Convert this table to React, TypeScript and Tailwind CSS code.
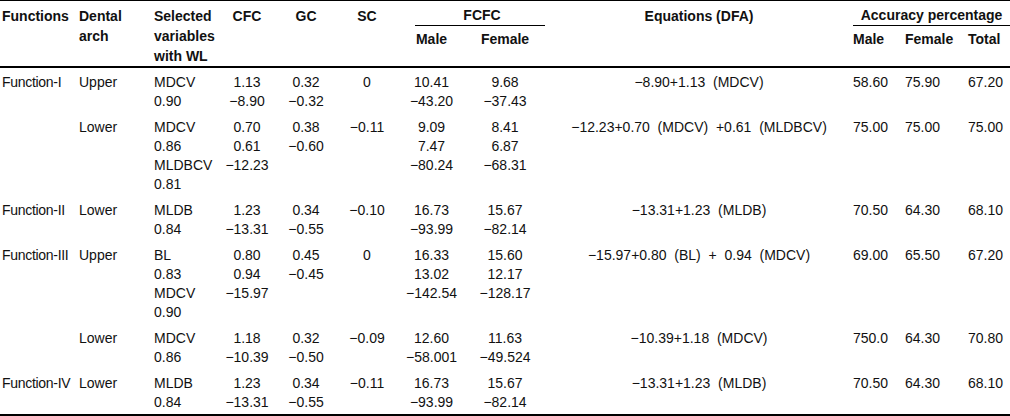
import React from 'react';

type Row = {
  fn: string;
  arch: string;
  vars: string[];
  cfc: string[];
  gc: string[];
  sc: string[];
  male: string[];
  female: string[];
  eq: string;
  acc: [string, string, string];
};

const rows: Row[] = [
  {
    fn: 'Function-I',
    arch: 'Upper',
    vars: ['MDCV', '0.90'],
    cfc: ['1.13', '\u22128.90'],
    gc: ['0.32', '\u22120.32'],
    sc: ['0'],
    male: ['10.41', '\u221243.20'],
    female: ['9.68', '\u221237.43'],
    eq: '\u22128.90+1.13  (MDCV)',
    acc: ['58.60', '75.90', '67.20'],
  },
  {
    fn: '',
    arch: 'Lower',
    vars: ['MDCV', '0.86', 'MLDBCV', '0.81'],
    cfc: ['0.70', '0.61', '\u221212.23'],
    gc: ['0.38', '\u22120.60'],
    sc: ['\u22120.11'],
    male: ['9.09', '7.47', '\u221280.24'],
    female: ['8.41', '6.87', '\u221268.31'],
    eq: '\u221212.23+0.70  (MDCV)  +0.61  (MLDBCV)',
    acc: ['75.00', '75.00', '75.00'],
  },
  {
    fn: 'Function-II',
    arch: 'Lower',
    vars: ['MLDB', '0.84'],
    cfc: ['1.23', '\u221213.31'],
    gc: ['0.34', '\u22120.55'],
    sc: ['\u22120.10'],
    male: ['16.73', '\u221293.99'],
    female: ['15.67', '\u221282.14'],
    eq: '\u221213.31+1.23  (MLDB)',
    acc: ['70.50', '64.30', '68.10'],
  },
  {
    fn: 'Function-III',
    arch: 'Upper',
    vars: ['BL', '0.83', 'MDCV', '0.90'],
    cfc: ['0.80', '0.94', '\u221215.97'],
    gc: ['0.45', '\u22120.45'],
    sc: ['0'],
    male: ['16.33', '13.02', '\u2212142.54'],
    female: ['15.60', '12.17', '\u2212128.17'],
    eq: '\u221215.97+0.80  (BL)  +  0.94  (MDCV)',
    acc: ['69.00', '65.50', '67.20'],
  },
  {
    fn: '',
    arch: 'Lower',
    vars: ['MDCV', '0.86'],
    cfc: ['1.18', '\u221210.39'],
    gc: ['0.32', '\u22120.50'],
    sc: ['\u22120.09'],
    male: ['12.60', '\u221258.001'],
    female: ['11.63', '\u221249.524'],
    eq: '\u221210.39+1.18  (MDCV)',
    acc: ['750.0', '64.30', '70.80'],
  },
  {
    fn: 'Function-IV',
    arch: 'Lower',
    vars: ['MLDB', '0.84'],
    cfc: ['1.23', '\u221213.31'],
    gc: ['0.34', '\u22120.55'],
    sc: ['\u22120.11'],
    male: ['16.73', '\u221293.99'],
    female: ['15.67', '\u221282.14'],
    eq: '\u221213.31+1.23  (MLDB)',
    acc: ['70.50', '64.30', '68.10'],
  },
];

const Lines = ({ items }: { items: string[] }) => (
  <>
    {items.map((t, i) => (
      <div key={i}>{t}</div>
    ))}
  </>
);

const App = () => {
  return (
    <div className="w-[1010px] bg-white text-[#111] font-['Liberation_Sans',Arial,sans-serif] text-[14px] leading-[19px]">
      <table className="w-[1010px] table-fixed border-collapse border-t border-b-[3px] border-black">
        <colgroup>
          <col className="w-[76px]" />
          <col className="w-[75px]" />
          <col className="w-[67px]" />
          <col className="w-[58px]" />
          <col className="w-[60px]" />
          <col className="w-[62px]" />
          <col className="w-[67px]" />
          <col className="w-[80px]" />
          <col className="w-[308px]" />
          <col className="w-[52px]" />
          <col className="w-[63px]" />
          <col className="w-[42px]" />
        </colgroup>
        <thead className="border-b-2 border-black font-bold leading-[20px]">
          <tr className="align-top">
            <th rowSpan={2} className="pl-[2px] pt-[5px] text-left font-bold">Functions</th>
            <th rowSpan={2} className="pl-[3px] pt-[5px] text-left font-bold">
              Dental
              <br />
              arch
            </th>
            <th rowSpan={2} className="pl-[3px] pt-[5px] text-left font-bold">
              Selected
              <br />
              variables
              <br />
              with WL
            </th>
            <th rowSpan={2} className="pt-[5px] text-center font-bold">CFC</th>
            <th rowSpan={2} className="pt-[5px] text-center font-bold">GC</th>
            <th rowSpan={2} className="pt-[5px] text-center font-bold">SC</th>
            <th colSpan={2} className="h-[25px] pt-[5px] font-bold">
              <div className="ml-[17px] border-b border-black pl-[4px] text-center leading-[19px]">FCFC</div>
            </th>
            <th rowSpan={2} className="pt-[5px] text-center font-bold">Equations (DFA)</th>
            <th colSpan={3} className="h-[25px] pt-[5px] font-bold">
              <div className="border-b border-black text-center whitespace-nowrap leading-[19px]">
                Accuracy percentage
              </div>
            </th>
          </tr>
          <tr className="align-top">
            <th className="h-[40px] pt-[3px] text-center font-bold">Male</th>
            <th className="h-[40px] pt-[3px] text-center font-bold">Female</th>
            <th className="h-[40px] pt-[3px] text-left font-bold">Male</th>
            <th className="h-[40px] pt-[3px] text-left font-bold">Female</th>
            <th className="h-[40px] pt-[3px] text-left font-bold">Total</th>
          </tr>
        </thead>
        <tbody>
          {rows.map((r, i) => (
            <tr key={i} className="align-top">
              <td className="pl-[2px] pt-[5px] pb-[2px] whitespace-nowrap tracking-[-0.3px]">{r.fn}</td>
              <td className="pl-[3px] pt-[5px] pb-[2px]">{r.arch}</td>
              <td className="pl-[3px] pt-[5px] pb-[2px]">
                <Lines items={r.vars} />
              </td>
              <td className="pt-[5px] pb-[2px] text-center">
                <Lines items={r.cfc} />
              </td>
              <td className="pt-[5px] pb-[2px] text-center">
                <Lines items={r.gc} />
              </td>
              <td className="pt-[5px] pb-[2px] text-center">
                <Lines items={r.sc} />
              </td>
              <td className="pt-[5px] pb-[2px] text-center">
                <Lines items={r.male} />
              </td>
              <td className="pt-[5px] pb-[2px] text-center">
                <Lines items={r.female} />
              </td>
              <td className="pt-[5px] pb-[2px] text-center whitespace-pre">{r.eq}</td>
              <td className="pt-[5px] pb-[2px] text-left">{r.acc[0]}</td>
              <td className="pt-[5px] pb-[2px] text-left">{r.acc[1]}</td>
              <td className="pt-[5px] pb-[2px] text-left">{r.acc[2]}</td>
            </tr>
          ))}
        </tbody>
      </table>
    </div>
  );
};

export default App;
